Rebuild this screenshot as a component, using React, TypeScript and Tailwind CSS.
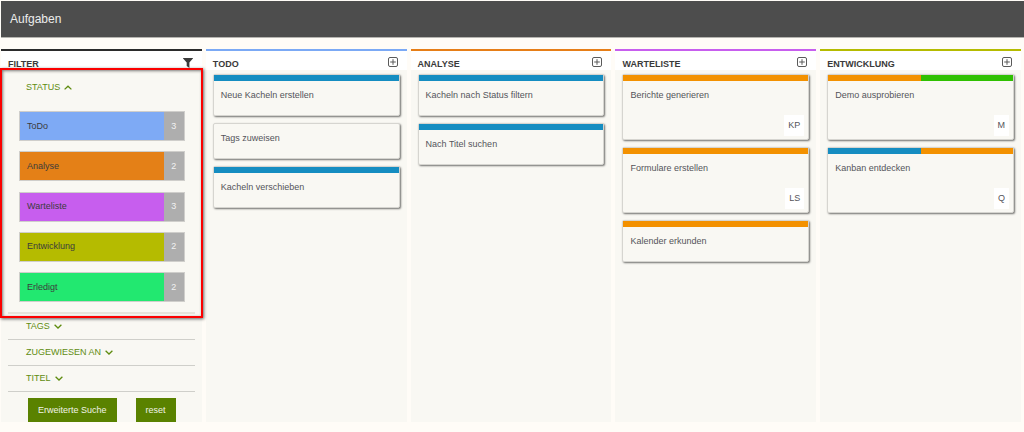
import React from "react";

type Card = { title: string; stripes: string[]; badge?: string };
type Column = { name: string; border: string; cards: Card[] };

const BLUE = "bg-[#158dc1]";
const ORANGE = "bg-[#f39100]";
const GREEN = "bg-[#2fc000]";

const columns: Column[] = [
  {
    name: "TODO",
    border: "border-[#7ba9f5]",
    cards: [
      { title: "Neue Kacheln erstellen", stripes: [BLUE] },
      { title: "Tags zuweisen", stripes: [] },
      { title: "Kacheln verschieben", stripes: [BLUE] },
    ],
  },
  {
    name: "ANALYSE",
    border: "border-[#e67e17]",
    cards: [
      { title: "Kacheln nach Status filtern", stripes: [BLUE] },
      { title: "Nach Titel suchen", stripes: [BLUE] },
    ],
  },
  {
    name: "WARTELISTE",
    border: "border-[#c75eee]",
    cards: [
      { title: "Berichte generieren", stripes: [ORANGE], badge: "KP" },
      { title: "Formulare erstellen", stripes: [ORANGE], badge: "LS" },
      { title: "Kalender erkunden", stripes: [ORANGE] },
    ],
  },
  {
    name: "ENTWICKLUNG",
    border: "border-[#b5bb00]",
    cards: [
      { title: "Demo ausprobieren", stripes: [ORANGE, GREEN], badge: "M" },
      { title: "Kanban entdecken", stripes: [BLUE, ORANGE], badge: "Q" },
    ],
  },
];

const statuses = [
  { name: "ToDo", count: 3, color: "bg-[#7eaaf5]" },
  { name: "Analyse", count: 2, color: "bg-[#e48017]" },
  { name: "Warteliste", count: 3, color: "bg-[#c75eee]" },
  { name: "Entwicklung", count: 2, color: "bg-[#b5bb00]" },
  { name: "Erledigt", count: 2, color: "bg-[#22e870]" },
];

function Chevron({ up = false }: { up?: boolean }) {
  return (
    <svg width="8" height="8" viewBox="0 0 8 8" fill="none" stroke="currentColor" strokeWidth="1.3" aria-hidden="true">
      <path d={up ? "M.6 5.4 4 2.2 7.4 5.4" : "M.6 1.8 4 5 7.4 1.8"} />
    </svg>
  );
}

function PlusIcon() {
  return (
    <svg width="10" height="10" viewBox="0 0 10 10" fill="none" stroke="#5a5a5a" aria-hidden="true">
      <rect x="0.5" y="0.5" width="9" height="9" rx="1.5" />
      <path d="M5 2.2v5.6M2.2 5h5.6" />
    </svg>
  );
}

function FunnelIcon() {
  return (
    <svg width="10" height="10" viewBox="0 0 10 10" fill="currentColor" aria-hidden="true">
      <path d="M.3 0h9.4c.3 0 .4.4.2.6L6.4 4.4V10L3.7 8V4.4L.1.6C-.1.4 0 0 .3 0Z" />
    </svg>
  );
}

function ColumnHead({ title, children }: { title: string; children: React.ReactNode }) {
  return (
    <div className="flex h-[19px] items-center justify-between bg-white pr-[9px] pl-[7px] text-[#3a3a3a]">
      <h2 className="pt-[7px] font-bold">{title}</h2>
      {children}
    </div>
  );
}

function TaskCard({ title, stripes, badge }: Card) {
  return (
    <li className="flex flex-col rounded-[2px] border border-[#d6d5d0] bg-[#f9f8f3] shadow-[1px_1px_2px_rgba(0,0,0,0.55)]">
      {stripes.length > 0 && (
        <div className="flex h-[6px]">
          {stripes.map((color, i) => (
            <span key={i} className={`flex-1 ${color}`} />
          ))}
        </div>
      )}
      <h3 className="h-[34px] px-[7px] pt-[8px] text-[#54545a]">{title}</h3>
      {badge && (
        <span className="mr-[4px] mb-[3px] flex h-[21px] items-center self-end bg-white px-[4px] text-[#54545a]">
          {badge}
        </span>
      )}
    </li>
  );
}

function Section({ name }: { name: string }) {
  return (
    <button type="button" className="flex h-[26px] items-center gap-[4px] border-b border-[#cfcfca] pl-[18px] text-[#5f8c10]">
      {name}
      <Chevron />
    </button>
  );
}

export default function App() {
  return (
    <div className="min-h-screen bg-[#fffcf7] pt-px font-['Liberation_Sans',Arial,sans-serif] text-[9px] leading-[13px]">
      <header className="ml-px flex h-[37px] items-center border-b border-[#b5b4b0] bg-[#4d4d4d] px-[9px]">
        <h1 className="text-[12px] text-[#ececec]">Aufgaben</h1>
      </header>

      <main className="grid grid-cols-5 gap-[4px] pt-[11px] pr-[3px] pl-px">
        <aside className="relative flex flex-col border-t-2 border-[#2b2b2b] bg-[#f9f8f3]">
          <ColumnHead title="FILTER">
            <button type="button" aria-label="Filter" className="pt-[5px]">
              <FunnelIcon />
            </button>
          </ColumnHead>

          <div className="flex flex-col px-[7px]">
            <div className="flex flex-col border-b-2 border-[#e5e3db] pb-[10px]">
              <button type="button" aria-expanded="true" className="flex items-center gap-[4px] pt-[11px] pl-[18px] text-[#5f8c10]">
                STATUS
                <Chevron up />
              </button>
              <div className="mt-[17px] flex h-[191px] flex-col justify-between pr-[10px] pl-[11px]">
                {statuses.map((s) => (
                  <button key={s.name} type="button" className="flex h-[30px] border border-[#cfcecb]">
                    <span className={`flex flex-1 items-center self-stretch pl-[7px] text-[#3c3c3c] ${s.color}`}>{s.name}</span>
                    <span className="flex w-[20px] items-center justify-center self-stretch bg-[#aeaeae] text-[#f2f2f2]">{s.count}</span>
                  </button>
                ))}
              </div>
            </div>
            <Section name="TAGS" />
            <Section name="ZUGEWIESEN AN" />
            <Section name="TITEL" />
            <div className="flex gap-[19px] pt-[6px] pl-[20px]">
              <button type="button" className="h-[24px] bg-[#5a8200] px-[10px] text-[#f1f4e8]">Erweiterte Suche</button>
              <button type="button" className="h-[24px] bg-[#5a8200] px-[10px] text-[#f1f4e8]">reset</button>
            </div>
          </div>

          <div className="pointer-events-none absolute -inset-x-px top-[17px] h-[250px] border-2 border-[#fb0000] shadow-[1px_1px_3px_rgba(0,0,0,0.6),inset_1px_1px_3px_rgba(0,0,0,0.5)]" />
        </aside>

        {columns.map((col) => (
          <section key={col.name} className={`border-t-2 bg-[#f9f8f3] ${col.border}`}>
            <ColumnHead title={col.name}>
              <button type="button" aria-label={`${col.name} hinzufügen`} className="pt-[3px]">
                <PlusIcon />
              </button>
            </ColumnHead>
            <ul className="flex flex-col gap-[7px] px-[7px] pt-[4px]">
              {col.cards.map((card) => (
                <TaskCard key={card.title} {...card} />
              ))}
            </ul>
          </section>
        ))}
      </main>
    </div>
  );
}
